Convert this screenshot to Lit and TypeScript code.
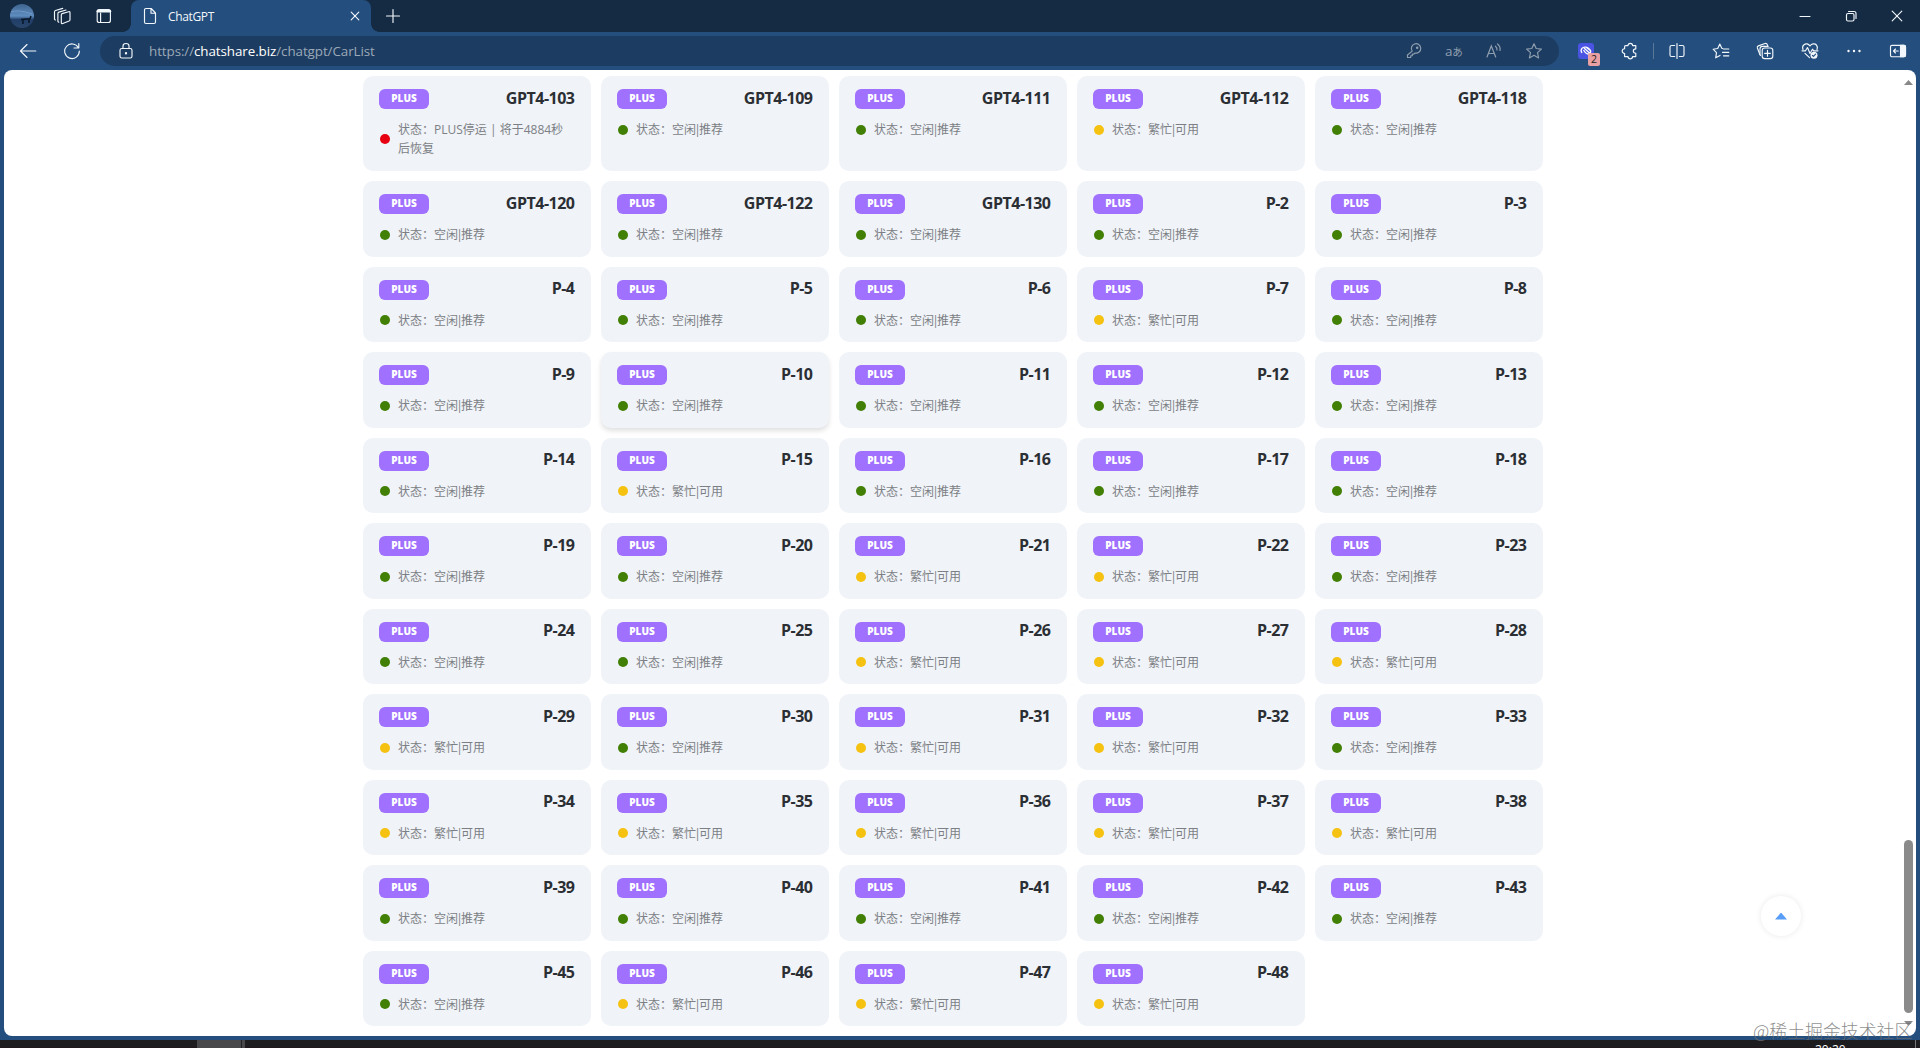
import { LitElement, html, css, svg } from "lit";
import { customElement, property } from "lit/decorators.js";

type Level = "free" | "busy" | "stopped";
interface Car { name: string; level: Level; text: unknown; raised: boolean; }

const STATUS: Record<Level, unknown> = {
  free: ["空闲", "推荐"],
  busy: ["繁忙", "可用"],
  stopped: "PLUS停运 | 将于4884秒后恢复",
};

const names = ["GPT4-103", "GPT4-109", "GPT4-111", "GPT4-112", "GPT4-118", "GPT4-120", "GPT4-122", "GPT4-130"];
for (let n = 2; n <= 48; n++) if (n !== 44) names.push(`P-${n}`);
const busy = new Set(["GPT4-112", ...[7, 15, 21, 22, 26, 27, 28, 29, 31, 32, 34, 35, 36, 37, 38, 46, 47, 48].map((n) => `P-${n}`)]);
const cars: Car[] = names.map((name) => {
  const level: Level = name === "GPT4-103" ? "stopped" : busy.has(name) ? "busy" : "free";
  return { name, level, text: STATUS[level], raised: name === "P-10" };
});

const icons: Record<string, unknown> = {
  workspaces: svg`<path d="M9.2 6.6 15.6 4.7Q17 4.4 17 5.8V12.7Q17 13.6 16.1 14L9.8 16.5Q8.3 17 8.3 15.5V8Q8.3 7 9.2 6.6ZM5.8 15.2 4.9 14.5V6.5Q4.9 5.4 5.9 5.1L13 3M2.3 13 1.5 12.2V5Q1.5 3.8 2.5 3.5L9.7 1.4"/>`,
  tabs: svg`<rect x="2.2" y="2.5" width="13.2" height="13" rx="2"/><path d="M3 4.2H14.8" stroke-width="2.8"/><path d="M5.6 6V15"/>`,
  page: svg`<path d="M5 1.5H10.2L14.5 6V15Q14.5 16.5 13 16.5H5Q3.5 16.5 3.5 15V3Q3.5 1.5 5 1.5ZM10 2V6.2H14.2"/>`,
  close: svg`<path d="M5.2 5.2 12.8 12.8M12.8 5.2 5.2 12.8"/>`,
  plus: svg`<path d="M9 2.5V15.5M2.5 9H15.5"/>`,
  back: svg`<path d="M16.8 9H1.5M8 2.5 1.5 9 8 15.5"/>`,
  reload: svg`<path d="M15.4 5.7A7.3 7.3 0 1 0 16.3 9M15.8 1.5V6H11"/>`,
  lock: svg`<rect x="3" y="6.5" width="12" height="9.5" rx="1.8"/><path d="M6 6.5V4Q6 1.5 9 1.5T12 4V6.5"/><circle cx="9" cy="11.2" r=".6" fill="currentColor"/>`,
  key: svg`<path d="M7.2 9.1A4.7 4.7 0 1 1 10 11L8.8 12.1H7.3V13.7H5.7V15.5H2.5V13Z"/><circle cx="12.2" cy="5.7" r=".7" fill="currentColor"/>`,
  star: svg`<path d="M9 1.8 11.2 6.5 16.4 7.1 12.5 10.7 13.6 15.9 9 13.3 4.4 15.9 5.5 10.7 1.6 7.1 6.8 6.5Z"/>`,
  puzzle: svg`<path d="M4.6 3.6H7Q7 1.3 9.3 1.3T11.6 3.6H14.8V6.8Q12.3 6.8 12.3 9T14.8 11.2V14.6H11.6Q11.4 16.8 9.3 16.8T7 14.6H3.6V11.5Q1.2 11.3 1.2 9.1T3.6 6.8V4.6Q3.6 3.6 4.6 3.6Z"/>`,
  split: svg`<path d="M9 1.5V16.5M6.7 3.5H3.5Q2 3.5 2 5V13Q2 14.5 3.5 14.5H6.7M11.3 3.5H14.5Q16 3.5 16 5V13Q16 14.5 14.5 14.5H11.3"/>`,
  favorites: svg`<path d="M10.7 6.5 9.8 6.3 7.8 2 5.7 6.5 1.1 7.2 4.5 10.7 3.7 15.8 8 13.4M11.5 7H16.8M10.5 10.4H16.8M11.5 13.8H16.8"/>`,
  collections: svg`<path d="M3.8 12.4 1.4 6Q.9 4.5 2.4 3.9L9 1.5Q10.7 1 11.3 2.6L11.9 4.2"/><rect x="6.2" y="6" width="10.6" height="10.6" rx="2.4"/><path d="M11.5 8.4V14.2M8.6 11.3H14.4M4.5 13.5Q3.8 13 4 11.5V7Q4 4.4 6.5 4.4H12"/>`,
  health: svg`<path d="M2 7.5Q.8 4.6 3 2.8C5 1 7.5 1.8 9 4 10.5 1.8 13.6 1 15.4 3Q17 4.8 16 7.5M1 8.8H4.5L6.5 5.5 9 11.5 11.5 7.2 12.7 8.8H17M4 11.3 8.5 15.7"/><circle cx="13" cy="13.2" r="3.5" fill="currentColor" stroke="none"/><path d="M11.4 13.3 12.5 14.4 14.6 12.1" stroke="#244e7d"/>`,
  more: svg`<g fill="currentColor" stroke="none"><circle cx="3.5" cy="9" r="1.2"/><circle cx="9" cy="9" r="1.2"/><circle cx="14.5" cy="9" r="1.2"/></g>`,
  sidebar: svg`<rect x="1.5" y="3.3" width="15" height="11.4" rx="1.5"/><path d="M11.5 3.3H15Q16.5 3.3 16.5 5V13Q16.5 14.7 15 14.7H11.5Z" fill="currentColor"/><path d="M9.3 9H4.5M6.5 7 4.5 9 6.5 11"/>`,
  minimize: svg`<path d="M4 9.5H14"/>`,
  restore: svg`<rect x="4.5" y="6.5" width="7.5" height="7.5" rx="1.5"/><path d="M6.5 4.5H12Q14 4.5 14 6.5V11.5"/>`,
  exit: svg`<path d="M4.2 4.2 13.8 13.8M13.8 4.2 4.2 13.8"/>`,
};

@customElement("ui-icon")
class UiIcon extends LitElement {
  @property() name = "";
  static styles = css`
    :host { display: block; width: 18px; height: 18px; flex: none; }
    svg { display: block; width: 100%; height: 100%; fill: none; stroke: currentColor; stroke-width: 1.15; stroke-linecap: round; stroke-linejoin: round; }
  `;
  render() { return html`<svg viewBox="0 0 18 18">${icons[this.name]}</svg>`; }
}

@customElement("browser-chrome")
class BrowserChrome extends LitElement {
  static styles = css`
    :host { display: block; color: #f2f7fc; font-family: "Segoe UI", "Open Sans", sans-serif; }
    .titlebar { display: flex; height: 32px; background: #152a43; align-items: center; box-sizing: border-box; padding-left: 10px; }
    .avatar { width: 24px; height: 24px; border-radius: 50%; overflow: hidden; margin-right: 19px; }
    .avatar svg { display: block; }
    .tabs-icon { margin-left: 24px; }
    .tab { position: relative; display: flex; align-items: center; box-sizing: border-box; width: 240px; height: 32px; margin-left: 18px; padding: 0 7px 0 10px; border-radius: 8px 8px 0 0; background: #244e7d; font-size: 12px; }
    .tab::before, .tab::after { content: ""; position: absolute; bottom: 0; width: 8px; height: 8px; }
    .tab::before { left: -8px; background: radial-gradient(circle at 0 0, transparent 7.5px, #244e7d 8px); }
    .tab::after { right: -8px; background: radial-gradient(circle at 100% 0, transparent 7.5px, #244e7d 8px); }
    .tab-title { margin-left: 9px; flex: 1; letter-spacing: -.35px; }
    .new-tab { margin-left: 13px; }
    .window { display: flex; margin-left: auto; gap: 28px; padding-right: 14px; }
    .toolbar { display: flex; align-items: center; height: 38px; background: #244e7d; box-sizing: border-box; padding: 0 13px 0 19px; }
    .reload { margin-left: 26px; }
    .address { display: flex; align-items: center; box-sizing: border-box; width: 1459px; height: 30px; margin-left: 19px; padding: 0 16px; border-radius: 15px; background: #1d3c61; }
    .lock { margin-left: 1px; }
    .url { margin-left: 14px; font-size: 13.4px; flex: 1; color: #9ba9b8; white-space: nowrap; letter-spacing: -.08px; }
    .host { color: #fff; }
    .tools { display: flex; align-items: center; color: #8e9eaf; gap: 22px; }
    .translate { width: 18px; font: 13.5px/18px "Open Sans", sans-serif; white-space: nowrap; letter-spacing: -.3px; }
    .kana { font: 10.5px/18px "Noto Sans CJK JP", sans-serif; }
    .reader { display: block; width: 18px; height: 18px; }
    .extension { position: relative; width: 16px; height: 16px; margin-left: 19px; border-radius: 3px; background: #4b53e2; }
    .extension svg { display: block; }
    .count { position: absolute; left: 10px; top: 10px; width: 12px; height: 13px; border-radius: 2px; background: #e9a0a3; color: #222; font: 10.5px/13px "Open Sans", sans-serif; text-align: center; }
    .puzzle { margin-left: 27px; }
    .divider { width: 1px; height: 16px; margin: 0 14px; background: #5b7899; }
    .actions { display: flex; flex: 1; justify-content: space-between; }
  `;
  render() {
    return html`
      <div class="titlebar">
        <div class="avatar"><svg viewBox="0 0 24 24"><defs><linearGradient id="sky" x1="0" y1="0" x2="0" y2="1"><stop offset="0" stop-color="#3f648f"/><stop offset=".5" stop-color="#5f8dc0"/><stop offset=".65" stop-color="#213e68"/><stop offset="1" stop-color="#294569"/></linearGradient></defs><rect width="24" height="24" fill="url(#sky)"/><path d="M1 8Q8 5 22 10" stroke="#6f99c8" fill="none"/><path d="M11 15.5 20 14.8 21 12M13 16V20M19 15V19" stroke="#071626" stroke-width="1.5" fill="none"/></svg></div>
        <ui-icon name="workspaces"></ui-icon>
        <ui-icon class="tabs-icon" name="tabs"></ui-icon>
        <div class="tab"><ui-icon name="page"></ui-icon><span class="tab-title">ChatGPT</span><ui-icon name="close"></ui-icon></div>
        <ui-icon class="new-tab" name="plus"></ui-icon>
        <div class="window"><ui-icon name="minimize"></ui-icon><ui-icon name="restore"></ui-icon><ui-icon name="exit"></ui-icon></div>
      </div>
      <div class="toolbar">
        <ui-icon name="back"></ui-icon><ui-icon class="reload" name="reload"></ui-icon>
        <div class="address">
          <ui-icon class="lock" name="lock"></ui-icon>
          <span class="url">https://<span class="host">chatshare.biz</span>/chatgpt/CarList</span>
          <div class="tools">
            <ui-icon name="key"></ui-icon>
            <span class="translate">a<span class="kana">あ</span></span>
            <svg class="reader" viewBox="0 0 18 18" fill="none" stroke="currentColor" stroke-width="1.2" stroke-linecap="round"><path d="M2 15 6.3 4 10.7 15M3.5 11.5H9.2M10.5 4.2Q12.2 5.7 12 8M12.5 2Q15.7 4.5 15 8.5"/></svg>
            <ui-icon name="star"></ui-icon>
          </div>
        </div>
        <div class="extension"><svg viewBox="0 0 16 16" fill="none" stroke="#fff" stroke-width="1.3"><path d="M4 10C1.5 6 5 3.5 8 4.2S14 8 12 10 8 11 5.5 7M6 5 11.5 10M8.5 4.5 13 8"/></svg><span class="count">2</span></div>
        <ui-icon class="puzzle" name="puzzle"></ui-icon><span class="divider"></span>
        <div class="actions">${["split", "favorites", "collections", "health", "more", "sidebar"].map((n) => html`<ui-icon name=${n}></ui-icon>`)}</div>
      </div>`;
  }
}

@customElement("car-card")
class CarCard extends LitElement {
  @property({ attribute: false }) car!: Car;
  static styles = css`
    :host { display: block; font-family: "Segoe UI", "Open Sans", "Noto Sans CJK SC", sans-serif; }
    .card { box-sizing: border-box; height: 100%; padding: 13px 16.5px 0 16px; border-radius: 10px; background: #f0f3f8; }
    .raised { box-shadow: 0 3px 5px rgba(0, 0, 0, .12); }
    .head { display: flex; justify-content: space-between; height: 20px; }
    .badge { width: 50px; height: 20px; border-radius: 6px; background: #a070ff; color: #fff; font-size: 10px; font-weight: 800; line-height: 18px; text-align: center; }
    .name { color: #2b2f34; font-size: 16px; font-weight: 700; line-height: 20px; letter-spacing: -.5px; margin-top: -1.4px; }
    .status { display: flex; align-items: center; margin-top: 11px; padding-left: 1px; }
    .dot { flex: none; width: 10px; height: 10px; border-radius: 50%; margin-right: 8px; }
    .free { background: #417f05; }
    .busy { background: #f5c211; }
    .stopped { background: #e60012; }
    .text { width: 168px; color: #7c7f84; font-size: 12px; line-height: 19.2px; }
    .bar { display: inline-block; width: 3px; text-indent: -1.8px; }
  `;
  render() {
    const c = this.car;
    const text = Array.isArray(c.text) ? html`${c.text[0]}<span class="bar">|</span>${c.text[1]}` : c.text;
    return html`<div class="card ${c.raised ? "raised" : ""}">
      <div class="head"><span class="badge">PLUS</span><span class="name">${c.name}</span></div>
      <div class="status"><span class="dot ${c.level}"></span><span class="text">状态：${text}</span></div>
    </div>`;
  }
}

@customElement("app-root")
class AppRoot extends LitElement {
  static styles = css`
    :host { display: block; width: 1920px; height: 1048px; overflow: hidden; position: relative; background: #244e7d; }
    .page { display: flex; justify-content: space-between; height: 966px; margin: 0 4px 4px; border-radius: 8px; background: #fff; overflow: hidden; }
    .cars { display: grid; grid-template-columns: repeat(5, 228px); grid-template-rows: 95px repeat(10, 75.5px); gap: 10px; padding: 6px 0 0 359px; }
    .scrollbar { display: flex; flex-direction: column; align-items: center; width: 15px; box-sizing: border-box; padding: 10px 0 10px; }
    .arrow { width: 9px; height: 5px; background: #888; clip-path: polygon(50% 0, 100% 100%, 0 100%); }
    .down { clip-path: polygon(0 0, 100% 0, 50% 100%); }
    .thumb { width: 9px; height: 173px; margin: auto 0 8px; border-radius: 5px; background: #8a8a8a; }
    .top { position: absolute; left: 1761px; top: 896px; display: grid; place-items: center; width: 40px; height: 40px; border-radius: 50%; background: #fff; box-shadow: 0 0 6px rgba(0, 0, 0, .09); }
    .caret { width: 12px; height: 7px; background: #589df8; clip-path: polygon(50% 0, 100% 100%, 0 100%); }
    .watermark { position: absolute; left: 1753px; top: 1018px; color: rgba(110, 110, 110, .8); font: 300 17.9px/24px "Noto Sans CJK SC", sans-serif; white-space: nowrap; }
    .taskbar { display: flex; height: 8px; background: linear-gradient(#1d1d20 0 85%, #221316); overflow: hidden; }
    .active { width: 44px; margin-left: 197px; background: #48484a; border-right: 1px solid #222; }
    .stacked { width: 3px; background: #48484a; }
    .clock { margin-left: 1570px; padding-top: 3px; color: #fff; font: 12px/14px "Open Sans", sans-serif; }
    .edge { width: 1px; margin-left: auto; margin-right: 4px; background: #777; }
  `;
  render() {
    return html`
      <browser-chrome></browser-chrome>
      <div class="page">
        <div class="cars">${cars.map((c) => html`<car-card .car=${c}></car-card>`)}</div>
        <div class="scrollbar"><span class="arrow"></span><span class="thumb"></span><span class="arrow down"></span></div>
      </div>
      <div class="taskbar"><span class="active"></span><span class="stacked"></span><span class="clock">20:20</span><span class="edge"></span></div>
      <div class="top"><span class="caret"></span></div>
      <div class="watermark">@稀土掘金技术社区</div>`;
  }
}
